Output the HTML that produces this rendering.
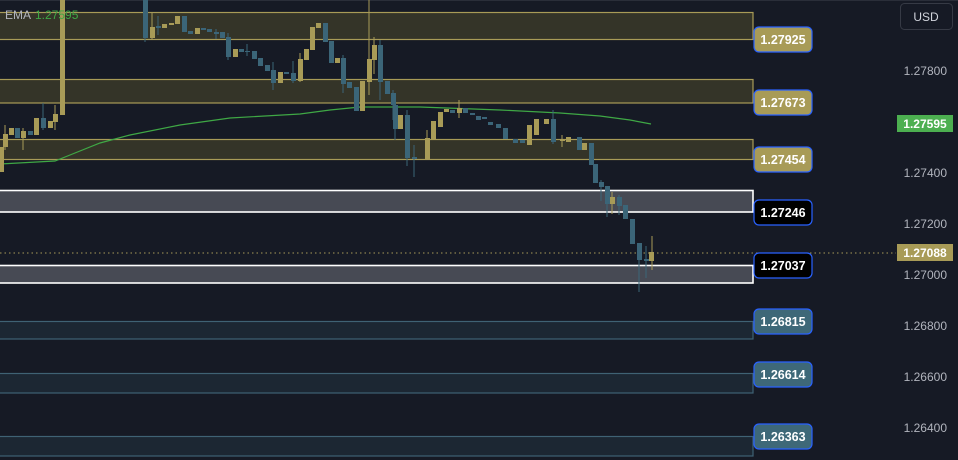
<!DOCTYPE html>
<html><head><meta charset="utf-8"><style>
html,body{margin:0;padding:0;background:#161a25;overflow:hidden}
svg{display:block}
text{font-family:"Liberation Sans",sans-serif}
</style></head><body>
<svg width="958" height="460" viewBox="0 0 958 460" xmlns="http://www.w3.org/2000/svg">
<rect width="958" height="460" fill="#161a25"/>
<rect width="958" height="1" fill="#2a2e39"/>
<!-- gold bands -->
<g fill="#343428" stroke="#a89b57" stroke-width="1.2">
<rect x="-2" y="12.5" width="755" height="27"/>
<rect x="-2" y="79.5" width="755" height="23.5"/>
<rect x="-2" y="139.5" width="755" height="20"/>
</g>
<g fill="#474a54" stroke="#ffffff" stroke-width="1.6">
<rect x="-2" y="190.5" width="755" height="21.5"/>
<rect x="-2" y="265.5" width="755" height="17.5"/>
</g>
<g fill="#1c2733" stroke="#3f6274" stroke-width="1.2">
<rect x="-2" y="321.5" width="755" height="17.5"/>
<rect x="-2" y="373.5" width="755" height="19.5"/>
<rect x="-2" y="436.5" width="755" height="19.5"/>
</g>
<line x1="0" y1="253" x2="896" y2="253" stroke="#a89b57" stroke-width="1" stroke-dasharray="1.5,3"/>
<!-- EMA -->
<polyline fill="none" stroke="#3fa845" stroke-width="1.2" points="0,164 55,161 70,155 100,143 130,135 180,125 230,118 300,114 330,110 360,107 420,107 500,110 560,113 600,116 630,120 651,124"/>
<!-- wicks -->
<g stroke-width="1">
<g stroke="#a89b57">
<line x1="5" y1="125" x2="5" y2="150"/><line x1="23" y1="128" x2="23" y2="150"/><line x1="55" y1="105" x2="55" y2="130"/>
<line x1="152" y1="13" x2="152" y2="39"/><line x1="369" y1="0" x2="369" y2="95"/><line x1="374" y1="37" x2="374" y2="74"/>
<line x1="427" y1="130" x2="427" y2="160"/><line x1="459" y1="100" x2="459" y2="118"/><line x1="562" y1="135" x2="562" y2="147"/>
<line x1="612" y1="192" x2="612" y2="214"/><line x1="652" y1="236" x2="652" y2="270"/><line x1="300" y1="53" x2="300" y2="82"/>
</g>
<g stroke="#3b6578">
<line x1="43" y1="103" x2="43" y2="130"/><line x1="145" y1="0" x2="145" y2="42"/><line x1="158" y1="16" x2="158" y2="35"/>
<line x1="216" y1="29" x2="216" y2="39"/><line x1="228" y1="33" x2="228" y2="60"/><line x1="247" y1="44" x2="247" y2="56"/>
<line x1="273" y1="62" x2="273" y2="90"/><line x1="293" y1="61" x2="293" y2="83"/><line x1="343" y1="55" x2="343" y2="93"/>
<line x1="393" y1="90" x2="393" y2="120"/><line x1="395" y1="124" x2="395" y2="140"/><line x1="407" y1="110" x2="407" y2="166"/>
<line x1="414" y1="145" x2="414" y2="177"/><line x1="553" y1="110" x2="553" y2="144"/><line x1="601" y1="180" x2="601" y2="201"/>
<line x1="607" y1="186" x2="607" y2="217"/><line x1="619" y1="195" x2="619" y2="215"/><line x1="639" y1="243" x2="639" y2="292"/>
<line x1="646" y1="246" x2="646" y2="278"/><line x1="380" y1="40" x2="380" y2="100"/>
</g>
</g>
<!-- bodies gold -->
<g fill="#a89b57">
<rect x="0" y="147" width="4" height="25"/><rect x="3" y="134" width="5" height="13"/><rect x="9" y="128" width="5" height="7"/><rect x="21" y="131" width="5" height="7"/><rect x="34" y="118" width="5" height="17"/><rect x="48" y="121" width="5" height="7"/><rect x="53" y="114" width="5" height="8"/><rect x="60" y="0" width="5" height="115"/>
<rect x="150" y="27" width="5" height="11"/><rect x="162" y="24" width="5" height="4"/><rect x="169" y="23" width="5" height="2"/><rect x="175" y="16" width="5" height="8"/><rect x="195" y="28" width="5" height="6"/>
<rect x="233" y="49" width="5" height="8"/><rect x="278" y="72" width="5" height="11"/><rect x="298" y="59" width="5" height="22"/><rect x="304" y="49" width="5" height="11"/><rect x="310" y="27" width="5" height="23"/><rect x="316" y="23" width="5" height="5"/><rect x="335" y="58" width="5" height="5"/>
<rect x="360" y="81" width="5" height="30"/><rect x="367" y="59" width="5" height="23"/><rect x="372" y="45" width="5" height="15"/>
<rect x="398" y="115" width="5" height="14"/><rect x="425" y="138" width="5" height="21"/><rect x="431" y="121" width="5" height="18"/><rect x="438" y="112" width="5" height="15"/><rect x="444" y="109" width="5" height="3"/><rect x="457" y="108" width="5" height="5"/>
<rect x="527" y="125" width="5" height="20"/><rect x="534" y="119" width="5" height="16"/><rect x="544" y="119" width="5" height="5"/><rect x="560" y="139" width="5" height="2"/><rect x="566" y="137" width="5" height="5"/><rect x="582" y="143" width="5" height="7"/><rect x="610" y="197" width="5" height="7"/><rect x="649" y="252" width="5" height="9"/>
</g>
<!-- bodies teal -->
<g fill="#3b6578">
<rect x="15" y="128" width="5" height="10"/><rect x="28" y="131" width="5" height="4"/><rect x="41" y="118" width="5" height="10"/>
<rect x="143" y="0" width="5" height="38"/><rect x="156" y="26" width="5" height="2"/><rect x="182" y="16" width="5" height="16"/><rect x="188" y="31" width="5" height="3"/><rect x="201" y="28" width="5" height="2"/><rect x="207" y="29" width="5" height="3"/><rect x="214" y="32" width="5" height="2"/><rect x="220" y="32" width="5" height="6"/><rect x="226" y="37" width="5" height="20"/>
<rect x="239" y="49" width="5" height="3"/><rect x="245" y="51" width="5" height="1"/><rect x="252" y="51" width="5" height="8"/><rect x="258" y="58" width="5" height="8"/><rect x="265" y="65" width="5" height="6"/><rect x="271" y="70" width="5" height="13"/><rect x="284" y="72" width="5" height="2"/><rect x="291" y="73" width="5" height="8"/>
<rect x="323" y="23" width="5" height="19"/><rect x="329" y="41" width="5" height="22"/><rect x="341" y="58" width="5" height="26"/><rect x="347" y="82" width="5" height="6"/><rect x="354" y="87" width="5" height="24"/><rect x="378" y="45" width="5" height="37"/><rect x="385" y="81" width="5" height="13"/><rect x="391" y="93" width="5" height="12"/>
<rect x="393" y="105" width="5" height="24"/><rect x="405" y="115" width="5" height="43"/><rect x="412" y="157" width="5" height="2"/><rect x="450" y="110" width="5" height="3"/><rect x="463" y="108" width="5" height="5"/><rect x="470" y="113" width="5" height="2"/><rect x="476" y="116" width="5" height="4"/><rect x="482" y="117" width="5" height="2"/><rect x="488" y="122" width="5" height="3"/><rect x="496" y="124" width="5" height="4"/><rect x="503" y="128" width="5" height="11"/><rect x="513" y="139" width="5" height="4"/><rect x="520" y="140" width="5" height="3"/>
<rect x="551" y="119" width="5" height="23"/><rect x="577" y="137" width="5" height="13"/><rect x="589" y="143" width="5" height="22"/><rect x="593" y="164" width="5" height="19"/><rect x="599" y="182" width="5" height="5"/><rect x="605" y="186" width="5" height="18"/><rect x="617" y="197" width="5" height="9"/><rect x="623" y="205" width="5" height="14"/><rect x="630" y="219" width="5" height="25"/><rect x="637" y="243" width="5" height="17"/><rect x="644" y="259" width="5" height="2"/>
</g>
<!-- EMA legend -->
<text x="5" y="19" font-size="12" fill="#b2b5be">EMA</text>
<text x="35" y="19" font-size="12" fill="#3fa845">1.27595</text>
<!-- level labels -->
<g font-size="12.5" font-weight="bold" text-anchor="middle" fill="#ffffff">
<rect x="754" y="27" width="58" height="25" rx="5" fill="#a89b57" stroke="#2962ff" stroke-width="1.2"/><text x="783" y="44">1.27925</text>
<rect x="754" y="90" width="58" height="25" rx="5" fill="#a89b57" stroke="#2962ff" stroke-width="1.2"/><text x="783" y="107">1.27673</text>
<rect x="754" y="147" width="58" height="25" rx="5" fill="#a89b57" stroke="#2962ff" stroke-width="1.2"/><text x="783" y="164">1.27454</text>
<rect x="754" y="200" width="58" height="25" rx="5" fill="#000000" stroke="#2962ff" stroke-width="1.2"/><text x="783" y="217">1.27246</text>
<rect x="754" y="253" width="58" height="25" rx="5" fill="#000000" stroke="#2962ff" stroke-width="1.2"/><text x="783" y="270">1.27037</text>
<rect x="754" y="309" width="58" height="25" rx="5" fill="#3e6878" stroke="#2962ff" stroke-width="1.2"/><text x="783" y="326">1.26815</text>
<rect x="754" y="362" width="58" height="25" rx="5" fill="#3e6878" stroke="#2962ff" stroke-width="1.2"/><text x="783" y="379">1.26614</text>
<rect x="754" y="424" width="58" height="25" rx="5" fill="#3e6878" stroke="#2962ff" stroke-width="1.2"/><text x="783" y="441">1.26363</text>
</g>
<!-- axis -->
<rect x="900.5" y="3.5" width="52" height="26" rx="4" fill="#161a25" stroke="#363a45"/>
<text x="926" y="21" font-size="12" fill="#d1d4dc" text-anchor="middle">USD</text>
<g font-size="12" fill="#b2b5be" text-anchor="end">
<text x="947" y="75">1.27800</text>
<text x="947" y="177">1.27400</text>
<text x="947" y="228">1.27200</text>
<text x="947" y="279">1.27000</text>
<text x="947" y="330">1.26800</text>
<text x="947" y="381">1.26600</text>
<text x="947" y="432">1.26400</text>
</g>
<rect x="897" y="115" width="56" height="17" fill="#4caf50"/>
<text x="925" y="128" font-size="12" font-weight="bold" fill="#ffffff" text-anchor="middle">1.27595</text>
<rect x="897" y="244" width="56" height="17" fill="#a89b57"/>
<text x="925" y="257" font-size="12" font-weight="bold" fill="#ffffff" text-anchor="middle">1.27088</text>
</svg>
</body></html>
